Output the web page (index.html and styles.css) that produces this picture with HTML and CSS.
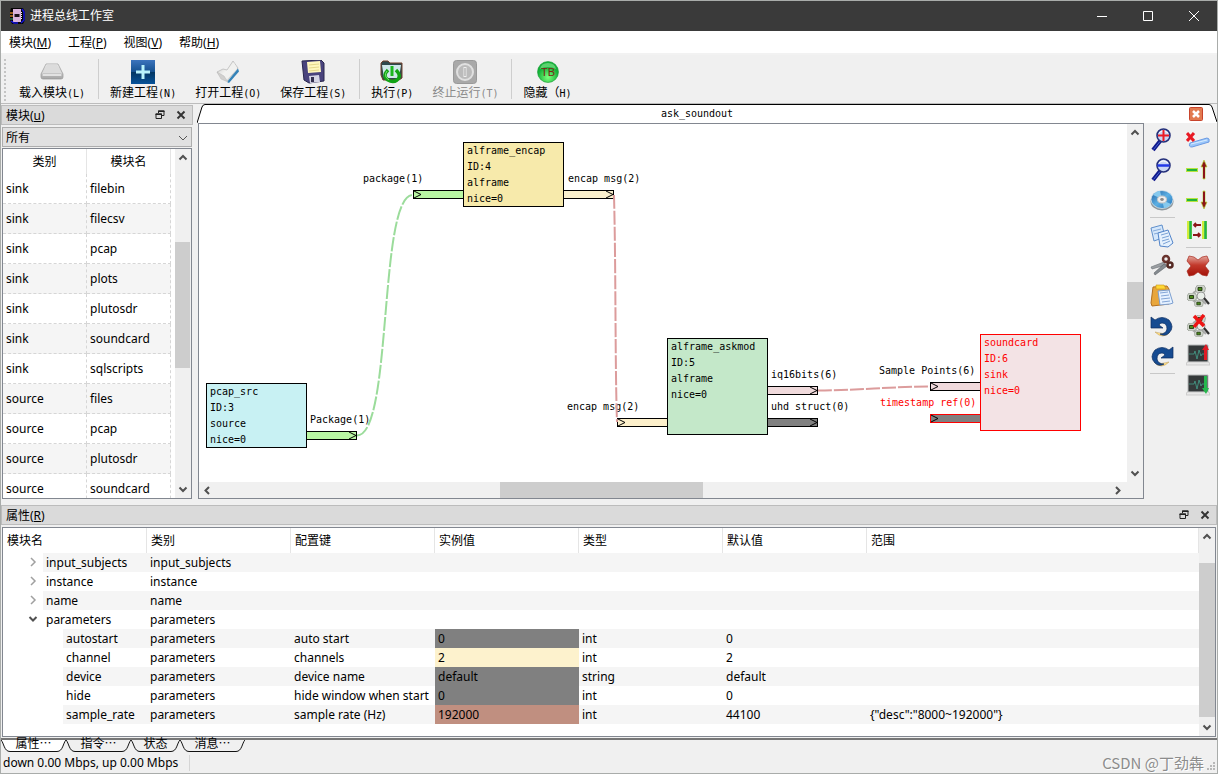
FILE: index.html
```html
<!DOCTYPE html>
<html lang="zh-CN">
<head>
<meta charset="utf-8">
<title>进程总线工作室</title>
<link rel="stylesheet" href="styles.css">
</head>
<body>
<svg class="defs" aria-hidden="true">
  <defs>
    <symbol id="up" viewBox="0 0 16 16"><path d="M4.500 10 8 6.500 11.500 10" fill="none" stroke="#505050" stroke-width="2"/></symbol>
    <symbol id="down" viewBox="0 0 16 16"><path d="M4.500 6 8 9.500 11.500 6" fill="none" stroke="#505050" stroke-width="2"/></symbol>
    <symbol id="left" viewBox="0 0 16 16"><path d="M10 4.500 6.500 8 10 11.500" fill="none" stroke="#505050" stroke-width="2"/></symbol>
    <symbol id="right" viewBox="0 0 16 16"><path d="M6 4.500 9.500 8 6 11.500" fill="none" stroke="#505050" stroke-width="2"/></symbol>
    <symbol id="branch" viewBox="0 0 16 16"><path d="M6 4 10 8 6 12" fill="none" stroke="#a0a0a0" stroke-width="1.500"/></symbol>
    <symbol id="float" viewBox="0 0 10 10"><path d="M3.500 3V1h5.500v4.500H7M1 4h5.500v4.500H1z" fill="none" stroke="#222"/><path d="M3 1.300h6.500M.5 4.300h6.500" stroke="#222" stroke-width="1.600"/></symbol>
    <symbol id="close" viewBox="0 0 10 10"><path d="M1.500 1.500l7 7M8.500 1.500l-7 7" stroke="#333" stroke-width="1.900"/></symbol>
    <symbol id="tab-l" viewBox="0 0 9 12"><path d="M0 0C3 3 3 11.500 9 11.500V0z" fill="var(--tab)"/><path d="M0 0C3 3 3 11.500 9 11.500" fill="none" stroke="#111"/></symbol>
    <symbol id="tab-r" viewBox="0 0 9 12"><path d="M9 0C6 3 6 11.500 0 11.500V0z" fill="var(--tab)"/><path d="M9 0C6 3 6 11.500 0 11.500" fill="none" stroke="#111"/></symbol>
    <linearGradient id="silver" x2="0" y2="1"><stop stop-color="#f4f4f4"/><stop offset="1" stop-color="#a5a5a5"/></linearGradient>
    <linearGradient id="page" x2="1" y2="1"><stop stop-color="#c4c4c4"/><stop offset=".5" stop-color="#f4f4f2"/><stop offset="1" stop-color="#d6d8d8"/></linearGradient>
    <linearGradient id="blue" x2="0" y2="1"><stop stop-color="#3c74bd"/><stop offset=".5" stop-color="#14508f"/><stop offset=".52" stop-color="#033764"/><stop offset="1" stop-color="#07539a"/></linearGradient>
    <linearGradient id="red" x2="0" y2="1"><stop stop-color="#e4a69d"/><stop offset=".45" stop-color="#c33a2c"/><stop offset="1" stop-color="#a31108"/></linearGradient>
    <linearGradient id="disc" x2="1" y2="1"><stop stop-color="#1d5c9f"/><stop offset=".5" stop-color="#5db0e4"/><stop offset="1" stop-color="#1d6db4"/></linearGradient>
    <radialGradient id="green" cy=".75"><stop stop-color="#7dff7d"/><stop offset="1" stop-color="#14b138"/></radialGradient>
    <symbol id="chip" viewBox="0 0 10 8"><path d="M0 3 2 0h6l2 3-1 4-3 1H2L0 6z" fill="#cfd4cb" stroke="#8d948a" stroke-width=".7"/><path d="M2.500 2.500h4v3h-4z" fill="#4c8c1a" stroke="#17290c" stroke-width=".8"/></symbol>
    <symbol id="modules" viewBox="0 0 24 24"><path d="M7 9 15 4M5 15l7 5M14 14l6 6" stroke="#aaa" stroke-width="2"/><use href="#chip" x="9" y="1" width="11" height="8"/><use href="#chip" x="1" y="9" width="10" height="8"/><use href="#chip" x="8" y="16" width="10" height="7"/><circle cx="15" cy="12" r="4" fill="#e9eee9" stroke="#999"/><path d="M18 14l5 6" stroke="#333" stroke-width="2.200"/></symbol>
    <symbol id="scope" viewBox="0 0 24 24"><path d="M2 1h20v17H2z" fill="#34393a" stroke="#b9bcbc"/><path d="M1 18h22l1 3H0z" fill="#e9e9e9" stroke="#b9b9b9" stroke-width=".6"/><path d="M3 10h5l1-3 2 8 2-9 2 6 1-2h5" fill="none" stroke="#45a08c" stroke-width=".8"/></symbol>
    <symbol id="lens" viewBox="0 0 24 24"><path d="M10.500 12.500 3 22" stroke="#10188c" stroke-width="4"/><path d="M10 13.500 3.500 21.500" stroke="#4867d0" stroke-width="1"/><circle cx="13.500" cy="7.500" r="6.500" fill="#c9d6f3" stroke="#25307a" stroke-width="1.600"/><path d="M9 5q4-4 9 0" stroke="#fff" fill="none"/></symbol>
  </defs>
</svg>

<div class="window">
  <header class="titlebar">
    <svg class="app-icon" viewBox="0 0 16 16"><path d="M2 0h12l2 4v8l-2 4H3l-2-4V4z" fill="#050505"/><path d="M1 5h3M1 8h3" stroke="#c67a24" stroke-width="1.500"/><path d="M1 11h3" stroke="#36aa79"/><path d="M4 1h8v13H4z" fill="#d9b4dc"/><path d="M5.500 6h5v3h-5z" fill="#181018"/><path d="M13 1l2 3v8l-3 3M2 13l3 2h4" fill="none" stroke="#1313dd" stroke-width="1.500"/><path d="M12.500 4v8" stroke="#eee" stroke-dasharray="1 1"/></svg>
    <h1 class="title">进程总线工作室</h1>
    <button class="win-btn" aria-label="最小化"><svg viewBox="0 0 10 10"><path d="M0 5.500h10" stroke="#fff"/></svg></button>
    <button class="win-btn" aria-label="最大化"><svg viewBox="0 0 10 10"><path d="M.5.500h9v9h-9z" fill="none" stroke="#fff"/></svg></button>
    <button class="win-btn" aria-label="关闭"><svg viewBox="0 0 10 10"><path d="M0 0l10 10M10 0 0 10" stroke="#fff"/></svg></button>
  </header>

  <nav class="menubar">
    <button>模块(<u>M</u>)</button><button>工程(<u>P</u>)</button><button>视图(<u>V</u>)</button><button>帮助(<u>H</u>)</button>
  </nav>

  <div class="toolbar">
    <span class="grip"></span>
    <button class="tool"><svg viewBox="0 0 24 24"><path d="M6 4h12l5 10v3q0 2-2 2H3q-2 0-2-2v-3z" fill="url(#silver)" stroke="#999" stroke-width=".7"/><path d="M7 4.500h10l5 9H2z" fill="#dcdcdc"/><path d="M3 14h18q2 1 0 2H3q-2-1 0-2z" fill="#f5f5f5" stroke="#aaa" stroke-width=".5"/></svg><span>载入模块<i>(L)</i></span></button>
    <span class="sep"></span>
    <button class="tool"><svg viewBox="0 0 24 24"><path d="M0 0h24v24H0z" fill="url(#blue)"/><path d="M12 5v14M5 12h14" stroke="#b8f3fb" stroke-width="3"/></svg><span>新建工程<i>(N)</i></span></button>
    <button class="tool"><svg viewBox="0 0 24 24"><path d="M1 12 7 9l4 1 6-9 5 7L11 21l-5-3z" fill="url(#page)" stroke="#b4b4b4" stroke-width=".7"/><path d="M11 11 18 3l3 6-11 11-3-3z" fill="#f1f1ef"/><path d="M11 22 22 8.500l1 3L13 23z" fill="#3583b8"/><path d="M1 12l7 4 4 6-7-3z" fill="#d1d0ce" stroke="#b9b9b9" stroke-width=".5"/></svg><span>打开工程<i>(O)</i></span></button>
    <button class="tool"><svg viewBox="0 0 24 24"><path d="M1 1 20 0l3 3v18l-15 2-5-3z" fill="#4a447d" stroke="#29264c"/><path d="M6 2 19 1l1 11-13 1z" fill="#fff7bd"/><path d="M8 5l10-1M8 8l10-1M8 11l10-1" stroke="#d8c974" stroke-width=".7"/><path d="M8 16l10-1 1 7-10 1z" fill="#d5d5e5"/><path d="M10 17h3v5h-3z" fill="#34304f"/></svg><span>保存工程<i>(S)</i></span></button>
    <span class="sep"></span>
    <button class="tool"><svg viewBox="0 0 24 24"><path d="M1 3 3 1h5l2 2h12v15l-3 2H3L1 15z" fill="#2f494d" stroke="#72412d"/><path d="M2 5h19l-2 13H4z" fill="#cfe8ea"/><path d="M8 10q-6 6 0 10 5 3 9 0 5-4-1-10" fill="none" stroke="#12a314" stroke-width="3.500"/><path d="M12 6v10" stroke="#1cb720" stroke-width="3"/><path d="M7 11q-4 5 2 9" fill="none" stroke="#78e36d"/></svg><span>执行<i>(P)</i></span></button>
    <button class="tool off" disabled><svg viewBox="0 0 24 24"><rect x=".5" y=".5" width="23" height="23" rx="3" fill="#a9a9a9" stroke="#999"/><circle cx="12" cy="12" r="8" fill="#bbb" stroke="#e0e0e0" stroke-width="2"/><path d="M12 7v10" stroke="#eee" stroke-width="3"/><path d="M12 8v8" stroke="#999"/></svg><span>终止运行<i>(T)</i></span></button>
    <span class="sep"></span>
    <button class="tool"><svg viewBox="0 0 24 24"><circle cx="12" cy="12" r="10.500" fill="url(#green)" stroke="#199b38" stroke-width=".6"/><path d="M4 9Q5 3 12 3t8 6q-8-4-16 0" fill="#8be894" opacity=".6"/><text x="12" y="16" class="tb">TB</text></svg><span>隐藏（<i>H)</i></span></button>
  </div>

  <main class="workspace">
    <aside class="modules">
      <div class="dock-title"><span>模块(<u>u</u>)</span><button aria-label="浮动"><svg><use href="#float"/></svg></button><button aria-label="关闭"><svg><use href="#close"/></svg></button></div>
      <div class="combo"><select aria-label="类别"><option>所有</option></select><svg viewBox="0 0 10 10"><path d="M1 3l4 4 4-4" fill="none" stroke="#555"/></svg></div>
      <div class="frame list-frame">
        <div class="list-view">
          <table class="list">
            <thead><tr><th>类别</th><th>模块名</th></tr></thead>
            <tbody>
              <tr><td>sink</td><td>filebin</td></tr><tr><td>sink</td><td>filecsv</td></tr><tr><td>sink</td><td>pcap</td></tr><tr><td>sink</td><td>plots</td></tr><tr><td>sink</td><td>plutosdr</td></tr><tr><td>sink</td><td>soundcard</td></tr><tr><td>sink</td><td>sqlscripts</td></tr><tr><td>source</td><td>files</td></tr><tr><td>source</td><td>pcap</td></tr><tr><td>source</td><td>plutosdr</td></tr><tr><td>source</td><td>soundcard</td></tr>
            </tbody>
          </table>
        </div>
        <div class="vbar"><svg><use href="#up"/></svg><div class="track"><span class="before-list"></span><span class="thumb list-thumb"></span></div><svg><use href="#down"/></svg></div>
      </div>
    </aside>

    <section class="editor">
      <div class="doc-tab">
        <svg class="edge" viewBox="0 0 8 19"><path d="M0 19 5 3Q6 .5 8 .5V19z" fill="#fff"/><path d="M0 19 5 3Q6 .5 8 .5" fill="none" stroke="#000"/></svg>
        <div class="doc-mid"><span>ask_soundout</span><button aria-label="关闭标签"><svg viewBox="0 0 14 14"><rect x=".5" y=".5" width="13" height="13" rx="1" fill="#e27a50" stroke="#c8442c"/><path d="M4 4l6 6M10 4l-6 6" stroke="#fff" stroke-width="2.500"/></svg></button></div>
        <svg class="edge" viewBox="0 0 8 19"><path d="M0 .5Q2 .5 3 3L8 19H0z" fill="#fff"/><path d="M0 .5Q2 .5 3 3L8 18" fill="none" stroke="#000"/></svg>
      </div>
      <div class="editor-row">
        <div class="frame canvas">
          <div class="scene">
            <svg class="graph" width="928" height="358" viewBox="0 0 928 358">
              <g class="node">
                <rect x="264.500" y="18.500" width="100" height="64" fill="#f7eaab"/>
                <text x="268" y="30">alframe_encap</text><text x="268" y="46">ID:4</text><text x="268" y="62">alframe</text><text x="268" y="78">nice=0</text>
                <rect x="214.500" y="66.500" width="50" height="8" fill="#b9f6a3"/><path d="M215 67l7 3.500-7 3.500"/><text x="164" y="58">package(1)</text>
                <rect x="364.500" y="66.500" width="50" height="8" fill="#faf0cd"/><path d="M407 67l7 3.500-7 3.500"/><text x="369" y="58">encap msg(2)</text>
              </g>
              <g class="node">
                <rect x="7.500" y="259.500" width="100" height="64" fill="#c8f1f3"/>
                <text x="11" y="271">pcap_src</text><text x="11" y="287">ID:3</text><text x="11" y="303">source</text><text x="11" y="319">nice=0</text>
                <rect x="107.500" y="307.500" width="50" height="8" fill="#b9f6a3"/><path d="M150 308l7 3.500-7 3.500"/><text x="111" y="299">Package(1)</text>
              </g>
              <g class="node">
                <rect x="468.500" y="214.500" width="100" height="96" fill="#c4e8c9"/>
                <text x="472" y="226">alframe_askmod</text><text x="472" y="242">ID:5</text><text x="472" y="258">alframe</text><text x="472" y="274">nice=0</text>
                <rect x="418.500" y="294.500" width="50" height="8" fill="#fdf0cb"/><path d="M419 295l7 3.500-7 3.500"/><text x="368" y="286">encap msg(2)</text>
                <rect x="568.500" y="262.500" width="50" height="8" fill="#f0dadc"/><path d="M611 263l7 3.500-7 3.500"/><text x="572" y="254">iq16bits(6)</text>
                <rect x="568.500" y="294.500" width="50" height="8" fill="#808080"/><path d="M611 295l7 3.500-7 3.500"/><text x="572" y="286">uhd struct(0)</text>
              </g>
              <g class="node">
                <rect x="731.500" y="258.500" width="50" height="8" fill="#f0dadc"/><path d="M732 259l7 3.500-7 3.500"/><text x="680" y="250">Sample Points(6)</text>
                <g class="selected">
                  <rect x="781.500" y="210.500" width="100" height="96" fill="#f3e3e5"/>
                  <text x="785" y="222">soundcard</text><text x="785" y="238">ID:6</text><text x="785" y="254">sink</text><text x="785" y="270">nice=0</text>
                  <rect x="731.500" y="290.500" width="50" height="8" fill="#808080"/><text x="681" y="282">timestamp ref(0)</text>
                </g>
                <path d="M732 291l7 3.500-7 3.500"/>
              </g>
              <path class="wire green" d="M158 311.500C194 311.500 179 71 214 71"/>
              <path class="wire red" d="M415 71C417 150 416 240 418 298"/>
              <path class="wire red" d="M619 266.500C655 266.500 695 262.500 731 262.500"/>
            </svg>
          </div>
          <div class="vbar"><svg><use href="#up"/></svg><div class="track"><span class="before-canvas"></span><span class="thumb canvas-thumb"></span></div><svg><use href="#down"/></svg></div>
          <div class="hbar"><svg><use href="#left"/></svg><div class="htrack"><span class="before-h"></span><span class="thumb h-thumb"></span></div><svg><use href="#right"/></svg></div>
        </div>
        <div class="side-tools">
          <div class="side-col">
            <button aria-label="放大"><svg viewBox="0 0 24 24"><use href="#lens"/><path d="M13.500 2v11M8 7.500h11" stroke="#ec1a24" stroke-width="2"/></svg></button>
            <button aria-label="缩小"><svg viewBox="0 0 24 24"><use href="#lens"/><path d="M7.500 7.500h12" stroke="#2038e8" stroke-width="2.500"/></svg></button>
            <button aria-label="光盘"><svg viewBox="0 0 24 24"><ellipse cx="12" cy="13.500" rx="11.500" ry="9" fill="#8c969c"/><ellipse cx="12" cy="11.500" rx="11" ry="9" fill="url(#disc)" stroke="#dae4eb" stroke-width=".8"/><path d="M12 11 3 7q3-4 7-4zM12 12l9 4q-3 4-7 4z" fill="#86c9ee"/><ellipse cx="12" cy="11.500" rx="4.500" ry="3.500" fill="#eee" stroke="#c6c6c6"/><ellipse cx="12" cy="11.500" rx="1.800" ry="1.400" fill="#888"/></svg></button>
            <span class="hsep"></span>
            <button aria-label="复制"><svg viewBox="0 0 24 24"><path d="M1 4 12 1l3 12-11 4z" fill="#d4e7fb" stroke="#5f8fcb"/><path d="M3 7l8-2M4 10l8-2" stroke="#86aad9"/><path d="M8 9l10-3 5 13-5 4-8-1z" fill="#e5f1fd" stroke="#5284c9"/><path d="M11 11l7-2M12 14l7-2M12 17l7-2M13 20l7-3" stroke="#7ba2d6"/></svg></button>
            <button aria-label="剪切"><svg viewBox="0 0 24 24"><path d="M14 8 1 13l1 2 14-4z" fill="#9b9fa3" stroke="#686d72" stroke-width=".6"/><path d="M14 10 4 19l1 2 12-9z" fill="#858b90" stroke="#5d6266" stroke-width=".6"/><circle cx="16" cy="5" r="3" fill="none" stroke="#68332d" stroke-width="2.500"/><circle cx="20" cy="11" r="2.500" fill="none" stroke="#552923" stroke-width="2.500"/></svg></button>
            <button aria-label="粘贴"><svg viewBox="0 0 24 24"><path d="M3 3 17 2l2 3v15L2 22 1 19z" fill="#e8a63c" stroke="#b36f1d"/><path d="M6 1h8l2 4H6z" fill="#ffd735" stroke="#c69418" stroke-width=".6"/><path d="M8 7 19 6l4 13-3 1-10 1z" fill="#e6f1ff" stroke="#7c9fd0"/><path d="M10 9l8-1M11 12l8-1M11 15l9-1M12 18l8-1" stroke="#83a5d6"/></svg></button>
            <button aria-label="撤销"><svg viewBox="0 0 24 24"><path d="M5 18q8 8 15 0-7 3-15 0" fill="#ffdb7a" stroke="#ba9a56" stroke-width=".5"/><path d="M1 3l4 3q7-5 14 0 6 7 0 13-4 4-9 1 6 0 7-5 0-6-5-6-2 0-3 2l4 3H1z" fill="#164b91" stroke="#0b2d60" stroke-width=".7"/></svg></button>
            <button aria-label="重做"><svg viewBox="0 0 24 24"><path d="M19 18q-8 8-15 0 7 3 15 0" fill="#ffdb7a" stroke="#ba9a56" stroke-width=".5"/><path d="M23 3l-4 3Q12 1 5 6-1 13 5 19q4 4 9 1-6 0-7-5 0-6 5-6 2 0 3 2l-4 3h12z" fill="#164b91" stroke="#0b2d60" stroke-width=".7"/></svg></button>
            <span class="hsep"></span>
          </div>
          <div class="side-col">
            <button aria-label="删除连线"><svg viewBox="0 0 24 24"><path d="M4 15 21 10q3 0 2 4L6 19q-4 0-2-4" fill="#9bc7fa" stroke="#6b9ae3"/><path d="M5 16l16-4" stroke="#d9ecff"/><path d="M1 5l7 8M8 5l-7 8" stroke="#e81923" stroke-width="3"/></svg></button>
            <button aria-label="上移"><svg viewBox="0 0 24 24"><path d="M0 10h12v4H0z" fill="#b8e340"/><path d="M1 12h10" stroke="#20b33b" stroke-width="2"/><path d="M18 2l3 7h-2v12h-2V9h-2z" fill="#8b1518" stroke="#b9d83a" stroke-width=".7"/><path d="M18 8v12" stroke="#8b1518" stroke-width="2"/></svg></button>
            <button aria-label="下移"><svg viewBox="0 0 24 24"><path d="M0 10h12v4H0z" fill="#b8e340"/><path d="M1 12h10" stroke="#20b33b" stroke-width="2"/><path d="M18 21l3-7h-2V3h-2v11h-2z" fill="#8b1518" stroke="#b9d83a" stroke-width=".7"/><path d="M18 4v12" stroke="#8b1518" stroke-width="2"/></svg></button>
            <button aria-label="对齐"><svg viewBox="0 0 24 24"><path d="M1 3h5v18H1zM16 3h5v18h-5z" fill="#d0ee3b"/><path d="M4.500 3v18M19.500 3v18" stroke="#1fb34c" stroke-width="2.500"/><path d="M8 7h7M10 5 8 7l2 2M7 17h7M12 15l2 2-2 2" fill="none" stroke="#8b1518" stroke-width="1.800"/></svg></button>
            <span class="hsep"></span>
            <button aria-label="删除"><svg viewBox="0 0 24 24"><path d="M3 2l5 1 4 3 4-3 5-1 2 5-4 5 4 5-2 5-5-1-4-3-4 3-5 1-2-5 4-5-4-5z" fill="url(#red)" stroke="#a8291e" stroke-width=".7"/></svg></button>
            <button aria-label="模块查找"><svg viewBox="0 0 24 24"><use href="#modules"/></svg></button>
            <button aria-label="移除模块"><svg viewBox="0 0 24 24"><use href="#modules"/><path d="M8 2l10 10M18 1 8 13" stroke="#ee1515" stroke-width="3.500"/></svg></button>
            <button aria-label="监视上移"><svg viewBox="0 0 24 24"><use href="#scope"/><path d="M20 0l3 6h-2v10h-3V6h-2z" fill="#e01b25"/></svg></button>
            <button aria-label="监视下移"><svg viewBox="0 0 24 24"><use href="#scope"/><path d="M20 20l3-6h-2V2h-3v12h-2z" fill="#25b84d"/></svg></button>
          </div>
        </div>
      </div>
    </section>
  </main>

  <section class="props">
    <div class="dock-title"><span>属性(<u>R</u>)</span><button aria-label="浮动"><svg><use href="#float"/></svg></button><button aria-label="关闭"><svg><use href="#close"/></svg></button></div>
    <div class="frame tree-frame">
      <table class="tree">
        <colgroup><col class="c"><col class="c"><col class="c"><col class="c"><col class="c"><col class="c"><col></colgroup>
        <thead><tr><th>模块名</th><th>类别</th><th>配置键</th><th>实例值</th><th>类型</th><th>默认值</th><th>范围</th></tr></thead>
        <tbody>
          <tr><td class="top"><svg><use href="#branch"/></svg><span>input_subjects</span></td><td>input_subjects</td><td></td><td></td><td></td><td></td><td></td></tr>
          <tr><td class="top"><svg><use href="#branch"/></svg><span>instance</span></td><td>instance</td><td></td><td></td><td></td><td></td><td></td></tr>
          <tr><td class="top"><svg><use href="#branch"/></svg><span>name</span></td><td>name</td><td></td><td></td><td></td><td></td><td></td></tr>
          <tr><td class="top"><svg><use href="#down"/></svg><span>parameters</span></td><td>parameters</td><td></td><td></td><td></td><td></td><td></td></tr>
          <tr><td class="sub"><span>autostart</span></td><td>parameters</td><td>auto start</td><td class="grey">0</td><td>int</td><td>0</td><td></td></tr>
          <tr><td class="sub"><span>channel</span></td><td>parameters</td><td>channels</td><td class="cream">2</td><td>int</td><td>2</td><td></td></tr>
          <tr><td class="sub"><span>device</span></td><td>parameters</td><td>device name</td><td class="grey">default</td><td>string</td><td>default</td><td></td></tr>
          <tr><td class="sub"><span>hide</span></td><td>parameters</td><td>hide window when start</td><td class="grey">0</td><td>int</td><td>0</td><td></td></tr>
          <tr><td class="sub"><span>sample_rate</span></td><td>parameters</td><td>sample rate (Hz)</td><td class="brown">192000</td><td>int</td><td>44100</td><td>{"desc":"8000~192000"}</td></tr>
        </tbody>
      </table>
      <div class="vbar"><svg><use href="#up"/></svg><div class="track"><span class="before-tree"></span><span class="thumb tree-thumb"></span></div><svg><use href="#down"/></svg></div>
    </div>
  </section>

  <nav class="tabs">
    <button class="tab current"><svg><use href="#tab-l"/></svg><span>属性⋯</span><svg><use href="#tab-r"/></svg></button>
    <button class="tab"><svg><use href="#tab-l"/></svg><span>指令⋯</span><svg><use href="#tab-r"/></svg></button>
    <button class="tab short"><svg><use href="#tab-l"/></svg><span>状态</span><svg><use href="#tab-r"/></svg></button>
    <button class="tab"><svg><use href="#tab-l"/></svg><span>消息⋯</span><svg><use href="#tab-r"/></svg></button>
  </nav>

  <footer class="status">
    <span class="rate">down 0.00 Mbps, up 0.00 Mbps</span>
    <span class="mark">CSDN @丁劲犇</span>
    <svg class="resize" viewBox="0 0 9 9"><path d="M6 0h2v2H6zM3 3h2v2H3zM6 3h2v2H6zM0 6h2v2H0zM3 6h2v2H3zM6 6h2v2H6z" fill="#b8b8b8"/></svg>
  </footer>
</div>
</body>
</html>
```
FILE: styles.css
```css
* { box-sizing: border-box; }
body {
  margin: 0;
  font: 12px/16px "Noto Sans", "Noto Sans CJK SC", sans-serif;
  color: #000;
}
button, select {
  font: inherit;
  color: inherit;
  background: none;
  border: 0;
  border-radius: 0;
  padding: 0;
  margin: 0;
}
svg { display: block; flex: none; }
.defs { position: absolute; width: 0; height: 0; }

.window {
  display: flex;
  flex-direction: column;
  height: 100vh;
  border: 1px solid #a9acaa;
  background: #f0f0f0;
  overflow: hidden;
}

.titlebar {
  display: flex;
  align-items: center;
  height: 30px;
  flex: none;
  padding-left: 8px;
  background: #3a3a3a;
  color: #fff;
}
.app-icon { width: 16px; height: 16px; }
.title { flex: 1; margin: 0 0 0 5px; font-size: 12px; font-weight: 400; }
.win-btn { width: 46px; height: 30px; display: flex; align-items: center; justify-content: center; }
.win-btn svg { width: 10px; height: 10px; }

.menubar {
  display: flex;
  gap: 17px;
  flex: none;
  height: 24px;
  padding: 2px 8px 0;
  background: #fff;
  border-bottom: 2px solid #f2f2f2;
}

.toolbar {
  display: flex;
  flex: none;
  height: 49px;
  padding-top: 4px;
  border-bottom: 1px solid #bcbcbc;
}
.grip { width: 2px; height: 42px; margin: 0 3px; border-left: 2px dotted #c4c4c4; }
.tool { display: flex; flex-direction: column; align-items: center; padding: 1px 9px 0 10px; white-space: nowrap; }
.tool svg { width: 24px; height: 24px; }
.tool span { font: 12px/15px "Noto Sans CJK SC", sans-serif; }
.tool i { font: 10px/15px "DejaVu Sans Mono", monospace; }
.tool.off { color: #8a8a8a; }
.sep { width: 1px; height: 40px; margin: 0 1px 0 4px; background: #cecece; }
.tb { font: 11px "Liberation Sans", sans-serif; fill: #7b2414; text-anchor: middle; }

.workspace { display: flex; flex: 1 1 0; min-height: 0; gap: 4px; }
.modules { display: flex; flex-direction: column; width: 192px; flex: none; padding-top: 1px; }
.dock-title {
  display: flex;
  align-items: center;
  gap: 11px;
  height: 20px;
  flex: none;
  padding: 0 6px 0 4px;
  background: #dadada;
  border: 1px solid #bcbcbc;
}
.dock-title span { flex: 1; padding-top: 2px; }
.dock-title svg { width: 10px; height: 10px; }
.combo { position: relative; height: 20px; margin: 2px 1px 1px; flex: none; }
.combo select {
  width: 100%;
  height: 20px;
  padding: 1px 3px 0;
  appearance: none;
  background: #e1e1e1;
  border: 1px solid #adadad;
}
.combo svg { position: absolute; right: 4px; top: 6px; width: 10px; height: 10px; pointer-events: none; }

.frame { border: 1px solid #828790; background: #fff; }
.list-frame { display: flex; flex: 1; min-height: 0; margin: 0 1px; }
.list-view { flex: 1; overflow: hidden; padding-right: 4px; }
.list { width: 100%; table-layout: fixed; border-collapse: separate; border-spacing: 0; }
.list th { height: 25px; padding: 0; font-weight: 400; border-right: 1px solid #e5e5e5; }
.list td { height: 30px; padding: 0 3px; border-right: 1px dashed #d6d6d6; border-bottom: 1px dashed #d6d6d6; }
.list tbody tr:nth-child(even) { background: #f5f5f5; }

.vbar { display: flex; flex-direction: column; width: 16px; background: #f0f0f0; }
.vbar svg, .hbar svg { width: 16px; height: 17px; }
.track { flex: 1; display: flex; flex-direction: column; min-height: 0; }
.thumb { background: #cdcdcd; }
.before-list { flex: 76; }
.list-thumb { flex: 126; margin-right: 1px; }
.list-frame .track::after { content: ""; flex: 113; }
.before-canvas { flex: 141; }
.canvas-thumb { flex: 37; }
.canvas .track::after { content: ""; flex: 146; }
.before-tree { flex: 18; }
.tree-thumb { flex: 155; }

.editor { display: flex; flex-direction: column; flex: 1; min-width: 0; }
.doc-tab { display: flex; height: 19px; flex: none; }
.edge { width: 8px; height: 19px; }
.doc-mid { flex: 1; display: flex; align-items: center; background: #fff; border-top: 1px solid #000; padding-right: 6px; }
.doc-mid span { flex: 1; text-align: center; font: 10px/16px "DejaVu Sans Mono", monospace; }
.doc-mid svg { width: 14px; height: 14px; }
.editor-row { display: flex; flex: 1; min-height: 0; }
.canvas {
  display: grid;
  grid-template: minmax(0, 1fr) 16px / minmax(0, 1fr) 16px;
  flex: 1;
  min-width: 0;
  margin-left: 1px;
}
.scene { overflow: hidden; }
.hbar { grid-column: 1 / 3; display: flex; padding-right: 17px; background: #f0f0f0; }
.htrack { display: flex; flex: 1; }
.before-h { flex: 285; }
.h-thumb { flex: 202; }
.htrack::after { content: ""; flex: 407; }
.graph text { font: 10px "DejaVu Sans Mono", monospace; fill: #000; white-space: pre; }
.node rect { stroke: #000; shape-rendering: crispEdges; }
.node path { fill: none; stroke: #000; }
.node .selected rect { stroke: #f00; }
.graph .selected text { fill: #f00; }
.wire { fill: none; stroke-width: 2; stroke-dasharray: 14 2; }
.green { stroke: #9bdc9b; }
.red { stroke: #dc9c9c; }

.side-tools { display: flex; gap: 11px; flex: none; padding: 2px 6px 0; }
.side-col { display: flex; flex-direction: column; width: 25px; }
.side-col button { height: 30px; }
.side-col svg { width: 24px; height: 24px; }
.hsep { height: 1px; margin: 2px 0 3px; background: #c8c8c8; }

.props { flex: none; padding-top: 6px; }
.tree-frame { display: flex; margin: 2px 1px 0; }
.tree { flex: 1; width: 0; margin-bottom: 12px; table-layout: fixed; border-collapse: separate; border-spacing: 0; }
.c { width: 144px; }
.tree th { height: 25px; padding: 0 4px; font-weight: 400; text-align: left; border-right: 1px solid #e5e5e5; }
.tree td { height: 19px; padding: 0 3px; white-space: nowrap; line-height: 19px; }
.tree tbody tr:nth-child(odd) td,
.tree tbody tr:nth-child(odd) span { background: #f5f5f5; }
.tree tbody tr td.top, .tree tbody tr td.sub { padding: 0; }
.tree tbody tr:nth-child(n) td.top, .tree tbody tr:nth-child(n) td.sub { background: #fff; }
.tree tbody tr:nth-child(n) td.grey { background: #808080; }
.tree tbody tr:nth-child(n) td.cream { background: #fdf2cd; }
.tree tbody tr:nth-child(n) td.brown { background: #c08f80; }
.top svg { float: left; width: 16px; height: 16px; margin: 1px 2px 0 22px; }
.top span, .sub span { display: block; height: 19px; padding-left: 3px; overflow: hidden; }
.sub span { margin-left: 60px; }
.tree-frame .track::after { content: ""; flex: 2; }

.tabs { display: flex; flex: none; height: 14px; margin-top: 1px; border-top: 2px solid #777; }
.tab { --tab: #f0f0f0; display: flex; width: 65px; height: 12px; }
.tab.short { width: 49px; }
.tab.current { --tab: #fff; }
.tab svg { width: 9px; height: 12px; }
.tab span { flex: 1; height: 12px; line-height: 8px; background: var(--tab); border-bottom: 1px solid #111; }

.status { display: flex; align-items: center; flex: none; height: 21px; }
.rate { flex: none; padding: 0 11px 0 2px; border-right: 1px solid #d5d5d5; }
.mark { margin-left: auto; font: 15px/20px "Noto Sans CJK SC", sans-serif; color: #8c8c8c; text-shadow: 1px 1px #fff; }
.resize { width: 9px; height: 9px; align-self: flex-end; margin: 0 1px 2px 3px; }
```
